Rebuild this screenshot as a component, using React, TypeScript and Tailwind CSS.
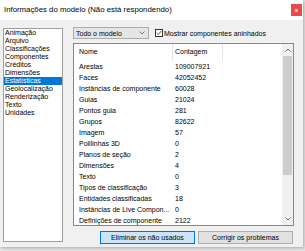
import React from 'react';

const categories = [
    'Animação',
    'Arquivo',
    'Classificações',
    'Componentes',
    'Créditos',
    'Dimensões',
    'Estatísticas',
    'Geolocalização',
    'Renderização',
    'Texto',
    'Unidades',
];

// the long name is shown cut by the list view, as in the original dialog
const stats: [string, string][] = [
    ['Arestas', '109007921'],
    ['Faces', '42052452'],
    ['Instâncias de componente', '60028'],
    ['Guias', '21024'],
    ['Pontos guia', '281'],
    ['Grupos', '82622'],
    ['Imagem', '57'],
    ['Polilinhas 3D', '0'],
    ['Planos de seção', '2'],
    ['Dimensões', '4'],
    ['Texto', '0'],
    ['Tipos de classificação', '3'],
    ['Entidades classificadas', '18'],
    ['Instâncias de Live Compon...', '0'],
    ['Definições de componente', '2122'],
];

const App: React.FC = () => {
    return (
        <div className="w-[305px] h-[251px] bg-[#e4e4e4] overflow-hidden font-['Liberation_Sans',sans-serif] text-black">
            <div className="w-[303px] h-[247px] flex flex-col bg-[#f0f0f0] shadow-[1px_1px_3px_rgba(0,0,0,0.25)]">
                {/* title bar */}
                <div className="h-[20px] bg-white flex items-start shrink-0">
                    <span className="pl-[4px] pt-[5px] text-[7.8px] leading-[10px]">
                        Informações do modelo (Não está respondendo)
                    </span>
                    <div className="ml-auto mr-[1px] mt-[4px] w-[11px] h-[12px] bg-[#e84a4a] flex items-center justify-center">
                        <span className="text-white text-[6px] leading-none font-bold">x</span>
                    </div>
                </div>

                {/* body */}
                <div className="flex flex-1 pl-[3px] pt-[8px]">
                    <div className="w-[60px] h-[214px] bg-white border border-[#a0a0a0] flex flex-col">
                        {categories.map((c) => (
                            <div
                                key={c}
                                className={`h-[8px] pl-[1px] text-[7px] leading-[8px] whitespace-nowrap ${
                                    c === 'Estatísticas' ? 'bg-[#0078d7] text-white' : ''
                                }`}
                            >
                                {c}
                            </div>
                        ))}
                    </div>

                    <div className="ml-[10px] w-[221px] flex flex-col">
                        {/* toolbar */}
                        <div className="flex items-center h-[12px] -mt-[1px]">
                            <div className="w-[76px] h-[12px] bg-[#e5e5e5] border border-[#acacac] flex items-center pl-[2px] pr-[3px]">
                                <span className="text-[7px] leading-none">Todo o modelo</span>
                                <svg className="ml-auto" width="6" height="4" viewBox="0 0 6 4">
                                    <path d="M0.5 0.5 L3 3 L5.5 0.5" fill="none" stroke="#606060" strokeWidth="0.8" />
                                </svg>
                            </div>
                            <div className="ml-[6px] w-[8px] h-[8px] border border-[#333] bg-white flex items-center justify-center">
                                <svg width="7" height="6" viewBox="0 0 7 6">
                                    <path d="M0.8 3 L2.6 4.8 L6.2 0.8" fill="none" stroke="#222" strokeWidth="0.9" />
                                </svg>
                            </div>
                            <span className="ml-[1px] text-[7px] leading-none">Mostrar componentes aninhados</span>
                        </div>

                        {/* table */}
                        <div className="mt-[4px] h-[183px] bg-white border border-[#828790] flex overflow-hidden">
                            <div className="flex-1 flex flex-col">
                                <div className="h-[17px] flex text-[7px] items-center shrink-0">
                                    <div className="w-[99px] h-full pl-[5px] flex items-center border-r border-[#e5e5e5]">Nome</div>
                                    <div className="w-[50px] h-full pl-[2px] flex items-center border-r border-[#e5e5e5]">Contagem</div>
                                </div>
                                {stats.map(([name, value]) => (
                                    <div key={name} className="h-[11px] flex items-center text-[7px] leading-[11px] shrink-0">
                                        <div className="w-[99px] shrink-0 pl-[5px] whitespace-nowrap">{name}</div>
                                        <div className="pl-[2px]">{value}</div>
                                    </div>
                                ))}
                            </div>
                            <div className="w-[11px] bg-[#f0f0f0] flex flex-col items-center shrink-0">
                                <div className="h-[12px] flex items-center justify-center">
                                    <svg width="6" height="4" viewBox="0 0 6 4">
                                        <path d="M0.5 3.5 L3 1 L5.5 3.5" fill="none" stroke="#606060" strokeWidth="0.9" />
                                    </svg>
                                </div>
                                <div className="w-[9px] h-[119px] bg-[#cdcdcd]" />
                                <div className="flex-1" />
                                <div className="h-[12px] flex items-center justify-center">
                                    <svg width="6" height="4" viewBox="0 0 6 4">
                                        <path d="M0.5 0.5 L3 3 L5.5 0.5" fill="none" stroke="#606060" strokeWidth="0.9" />
                                    </svg>
                                </div>
                            </div>
                        </div>

                        {/* buttons */}
                        <div className="mt-[5px] flex justify-end gap-[3px] pr-[1px]">
                            <button className="w-[95px] h-[13px] bg-[#cce4f7] border border-[#0078d7] text-[7px] leading-none flex items-center justify-center">
                                Eliminar os não usados
                            </button>
                            <button className="w-[95px] h-[13px] bg-[#e1e1e1] border border-[#adadad] text-[7px] leading-none flex items-center justify-center">
                                Corrigir os problemas
                            </button>
                        </div>
                    </div>
                </div>
            </div>
        </div>
    );
};

export default App;
